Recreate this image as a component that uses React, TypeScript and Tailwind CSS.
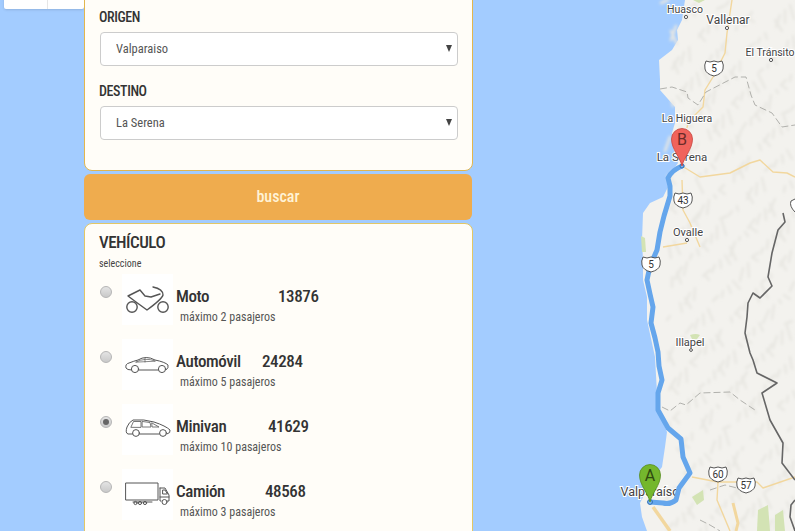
const vehicles = [
  { id: "moto", name: "Moto", price: "13876", nameW: "w-[102px]", sub: "máximo 2 pasajeros" },
  { id: "auto", name: "Automóvil", price: "24284", nameW: "w-[86px]", sub: "máximo 5 pasajeros" },
  { id: "van", name: "Minivan", price: "41629", nameW: "w-[92px]", sub: "máximo 10 pasajeros" },
  { id: "truck", name: "Camión", price: "48568", nameW: "w-[89px]", sub: "máximo 3 pasajeros" },
];

const stroke = { fill: "none", stroke: "#555", strokeLinecap: "round", strokeLinejoin: "round" } as const;

const VehicleIcon = ({ id }: { id: string }) => {
  if (id === "moto") {
    return (
      <svg width="50" height="50" viewBox="0 0 50 50">
        <g {...stroke} strokeWidth="1.4">
          <circle cx="10" cy="33" r="5.2" />
          <circle cx="41" cy="33" r="5.2" />
          <path d="M31 13 Q41 15 41 21 Q40 25 25 36 L14 28 L6 22 L18 16 L23 22 L29 23 L38 20" />
        </g>
      </svg>
    );
  }
  if (id === "auto") {
    return (
      <svg width="50" height="50" viewBox="0 0 50 50">
        <g {...stroke} strokeWidth="1">
          <circle cx="13" cy="30" r="3.6" />
          <circle cx="40" cy="30" r="3.6" />
          <path d="M9.5 31 Q5 31 4 29 Q3 25 7 24 Q12 22 16 21 Q24 16 33 21 Q43 23 46 26 Q47 29 44 31 M16.5 31 H36.5" />
          <path d="M14 23 Q24 18 33 22 Z M23 19.5 V23" strokeWidth="0.7" />
        </g>
      </svg>
    );
  }
  if (id === "van") {
    return (
      <svg width="50" height="50" viewBox="0 0 50 50">
        <g {...stroke} strokeWidth="1">
          <circle cx="14" cy="29" r="3.4" />
          <circle cx="41" cy="29" r="3.4" />
          <path d="M10.5 30 H6 Q3 29 5 23 Q7 18 11 16 Q22 15 32 18 Q44 22 48 26 Q49 29 45 30 M17.5 30 H37.5" />
          <path d="M9 23 L11.5 17.5 H19 V23 Z M20.5 17.5 L28 18.5 L29 23 H20.5 Z M30 19 L37 23 H30.5 Z" strokeWidth="0.8" />
        </g>
      </svg>
    );
  }
  return (
    <svg width="50" height="50" viewBox="0 0 50 50">
      <g {...stroke} strokeWidth="1">
        <path d="M4 14 H36 V31 H4 Z" />
        <path d="M38 19 H43 L47 26 V32 H45.5 M38 19 V32 H39 M41 21 H43 L45.5 25 H41 Z M38 28 H47" />
        <circle cx="42.5" cy="33" r="2.5" />
        <path d="M11 33 H30" />
        <circle cx="13.5" cy="34" r="1.6" />
        <circle cx="18" cy="34" r="1.6" />
        <circle cx="23" cy="34" r="1.6" />
      </g>
    </svg>
  );
};

// soft relief marks, denser on the east side like the terrain layer
const blotches = Array.from({ length: 340 }, (_, i) => {
  const x = 668 + ((i * 73) % 127);
  const y = (i * 131) % 531;
  const l = 3 + ((i * 11) % 12);
  const dx = ((i * 17) % 15) - 7;
  return `M${x} ${y} l${dx} ${l}`;
});

const Shield = ({ x, y, label }: { x: number; y: number; label: string }) => (
  <g transform={`translate(${x} ${y})`}>
    <path
      d="M-8 -7 Q-4 -5 0 -7 Q4 -5 8 -7 Q10 -3 9 1 Q8 6 0 8 Q-8 6 -9 1 Q-10 -3 -8 -7 Z"
      fill="#fff"
      stroke="#444"
      strokeWidth="0.9"
    />
    <text x="0" y="4" textAnchor="middle" fontSize="10" fill="#333" fontFamily="Roboto, sans-serif">
      {label}
    </text>
  </g>
);

const Pin = ({ x, y, fill, edge, ink, label }: { x: number; y: number; fill: string; edge: string; ink: string; label: string }) => (
  <g transform={`translate(${x} ${y})`}>
    <path
      d="M0 0 C-2 -9 -10.5 -17 -10.5 -27 A10.5 10.5 0 1 1 10.5 -27 C10.5 -17 2 -9 0 0 Z"
      fill={fill}
      stroke={edge}
      strokeWidth="0.8"
    />
    <text x="0" y="-21" textAnchor="middle" fontSize="16" fill={ink} fontFamily="Roboto, sans-serif">
      {label}
    </text>
  </g>
);

const Place = ({ x, y, size, children }: { x: number; y: number; size: number; children: string }) => (
  <text
    x={x}
    y={y}
    textAnchor="middle"
    fontSize={size}
    fill="#444"
    stroke="#fff"
    strokeWidth="2"
    paintOrder="stroke"
    fontFamily="Roboto, sans-serif"
  >
    {children}
  </text>
);

const MapDrawing = () => (
  <svg className="absolute inset-0 font-stretch-normal" width="795" height="531" viewBox="0 0 795 531">
    <defs>
      <filter id="soft">
        <feGaussianBlur stdDeviation="1.5" />
      </filter>
      <filter id="line">
        <feGaussianBlur stdDeviation="0.5" />
      </filter>
    </defs>
    <path
      d="M685 0 L682 20 L677 30 L678 40 L672 50 L659 60 L660 80 L660 90 L675 107 L675 123 L672 133 L673 147 L678 163 L668 177 L668 187 L663 197 L650 203 L643 213 L642 240 L643 260 L643 280 L647 297 L647 320 L655 357 L657 393 L657 407 L667 432 L665 447 L662 467 L652 480 L640 503 L642 517 L647 531 L795 531 L795 0 Z"
      fill="#f3f2ee"
    />
    <g filter="url(#soft)" stroke="#e8e7e2" strokeWidth="2.5" fill="none" strokeLinecap="round">
      {blotches.map((d, i) => (
        <path key={i} d={d} />
      ))}
    </g>
    <g fill="#d3e3b4">
      <path d="M641 236 L645 238 L646 252 L642 252 Z" />
      <path d="M690 335 Q696 333 700 335 L697 339 L692 339 Z" />
      <path d="M692 497 L703 490 L704 500 L697 505 Z" />
      <path d="M758 510 L768 505 L770 531 L757 531 Z" />
      <path d="M775 515 L783 510 L785 531 L775 531 Z" />
      <path d="M693 0 L705 0 L699 3 Z" />
    </g>
    <g fill="none" stroke="#f2d79e" strokeWidth="1.4" strokeLinejoin="round">
      <path d="M732 0 L727 33 L725 53 L713 77 L705 90 L703 107 L688 122 L687 128" />
      <path d="M682 166 L700 177 L730 173 L750 163 L760 160 L773 172 L787 173 L795 177" />
      <path d="M682 180 L683 210 L690 223 L700 247 M663 247 L687 243" />
      <path d="M692 477 L718 482 L717 500 L730 531" />
      <path d="M718 482 L757 482 L763 488 L795 477" />
      <path d="M733 503 L738 523 L736 531" strokeWidth="3" />
      <path d="M653 507 L670 531" strokeWidth="3.5" />
    </g>
    <g fill="none" stroke="#a9a9a5" strokeWidth="0.9" strokeDasharray="7 3">
      <path d="M660 89 L672 87 L687 92 L688 98 L698 105 L706 92 L735 77 L746 77 L751 95 L755 105 L772 113 L782 127 L795 125" />
      <path d="M662 407 L670 411 L680 403 L686 405 L700 393 L730 392 L740 400 L755 410" />
      <path d="M700 520 L710 525 L720 531 M710 490 L725 485 L745 490" />
    </g>
    <path
      d="M783 213 L785 222 L778 230 L772 253 L768 277 L772 286 L760 298 L753 293 L748 303 L747 317 L745 333 L750 353 L753 360 L757 373 L777 383 L762 393 L770 420 L783 443 L782 463 L795 480"
      fill="none"
      stroke="#666"
      strokeWidth="1.6"
      strokeLinejoin="round"
    />
    <path d="M795 500 L791 505 L790 517 L795 531" fill="none" stroke="#666" strokeWidth="1.6" />
    <Place x={685} y={13} size={10.5}>Huasco</Place>
    <circle cx="686" cy="17" r="1.6" fill="#fff" stroke="#555" />
    <Place x={728} y={24} size={12}>Vallenar</Place>
    <circle cx="727" cy="28" r="1.6" fill="#fff" stroke="#555" />
    <Place x={770} y={56} size={10.5}>El Tránsito</Place>
    <circle cx="771" cy="60" r="1.6" fill="#fff" stroke="#555" />
    <Place x={687} y={122} size={10.5}>La Higuera</Place>
    <Place x={682} y={161} size={11.5}>La Serena</Place>
    <Place x={688} y={236} size={11}>Ovalle</Place>
    <circle cx="687" cy="240" r="1.6" fill="#fff" stroke="#555" />
    <Place x={690} y={346} size={11}>Illapel</Place>
    <circle cx="691" cy="350" r="1.4" fill="#fff" stroke="#555" />
    <Place x={650} y={496} size={12.5}>Valparaíso</Place>
    <Shield x={714} y={68} label="5" />
    <Shield x={683} y={200} label="43" />
    <Shield x={718} y={474} label="60" />
    <Shield x={746} y={485} label="57" />
    <path d="M795 199 L791 201 Q789 206 795 212" fill="#fff" stroke="#444" strokeWidth="0.9" />
    <path
      d="M682 166 Q672 170 668 178 L670 186 L670 196 L664 216 L660 232 L657 250 L650 266 L647 280 L650 294 L653 307 L651 323 L655 338 L658 352 L659 366 L662 380 L658 393 L658 410 L668 428 L681 439 L683 457 L690 473 L679 488 L676 500 Q670 505 663 503 L650 502"
      fill="none"
      stroke="#65a6ec"
      strokeWidth="5"
      strokeLinejoin="round"
      strokeLinecap="round"
      filter="url(#line)"
    />
    <Shield x={651} y={264} label="5" />
    <circle cx="682" cy="166" r="2" fill="#7db4ee" stroke="#2d6fb5" />
    <circle cx="650" cy="502" r="2.4" fill="#7db4ee" stroke="#2d6fb5" />
    <Pin x={682} y={166} fill="#f0635c" edge="#c7443e" ink="#6b2b28" label="B" />
    <Pin x={650} y={502} fill="#74b72d" edge="#568c1d" ink="#2f4a10" label="A" />
  </svg>
);

const CitySelect = ({ label, value }: { label: string; value: string }) => (
  <div className="flex flex-col">
    <label className="pl-[14px] text-[14px] leading-[18px] font-medium tracking-[-0.4px] text-[#333]">{label}</label>
    <div className="relative ml-[15px] mr-[14px] mt-[6px]">
      <select
        defaultValue={value}
        className="h-[34px] w-full appearance-none rounded-[4px] border border-[#ccc] bg-white pl-[15px] text-[12.5px] text-[#555]"
      >
        <option>{value}</option>
      </select>
      <span className="absolute right-[6px] top-[13px] h-0 w-0 border-x-[3.5px] border-t-[7px] border-x-transparent border-t-[#444]" />
    </div>
  </div>
);

const VehicleRow = ({ v }: { v: (typeof vehicles)[number] }) => {
  const selected = v.id === "van";
  return (
    <div className="flex h-[65px] items-start">
      <span className="ml-px mt-[12px] flex h-[12px] w-[12px] items-center justify-center rounded-full border border-[#b5b5b5] bg-gradient-to-b from-[#e4e4e4] to-[#c9c9c9]">
        {selected && <span className="h-[6px] w-[6px] rounded-full bg-[#666]" />}
      </span>
      <div className="ml-[10px] h-[51px] w-[51px] bg-white">
        <VehicleIcon id={v.id} />
      </div>
      <div className="ml-[3px] flex flex-col">
        <div className="mt-[11px] flex text-[17px] leading-[22px] font-medium tracking-[-0.4px] text-[#333]">
          <span className={v.nameW}>{v.name}</span>
          <span>{v.price}</span>
        </div>
        <span className="ml-[4px] mt-[2px] text-[12px] leading-[16px] text-[#555]">{v.sub}</span>
      </div>
    </div>
  );
};

export default function App() {
  return (
    <div className="relative h-[531px] w-[795px] overflow-hidden bg-[#a3ccff] font-['Roboto',sans-serif] font-stretch-condensed">
      <MapDrawing />
      <div className="absolute left-[4px] top-[-21px] flex h-[30px] w-[80px] rounded-[2px] bg-white shadow-sm">
        <div className="w-[44px] border-r border-[#e6e6e6]" />
      </div>
      <div className="relative ml-[84px] mt-[-20px] flex w-[389px] flex-col">
        <div className="flex h-[191px] flex-col gap-[16px] rounded-b-[8px] border border-[#e2b64e] bg-[#fffdf8] pt-[27px]">
          <CitySelect label="ORIGEN" value="Valparaiso" />
          <CitySelect label="DESTINO" value="La Serena" />
        </div>
        <button className="mt-[3px] h-[46px] w-[388px] rounded-[6px] bg-[#efac4e] text-[16px] font-medium text-[#fff3d6]">
          buscar
        </button>
        <div className="mt-[3px] flex h-[340px] flex-col rounded-t-[8px] border border-[#e2c766] bg-[#fffdf8] pl-[14px] pt-[7px]">
          <h2 className="text-[17px] leading-[22px] font-medium tracking-[-0.5px] text-[#333]">VEHÍCULO</h2>
          <p className="mt-[4px] text-[10px] leading-[14px] text-[#444]">seleccione</p>
          <div className="mt-[3px] flex flex-col">
            {vehicles.map((v) => (
              <VehicleRow key={v.id} v={v} />
            ))}
          </div>
        </div>
      </div>
    </div>
  );
}
